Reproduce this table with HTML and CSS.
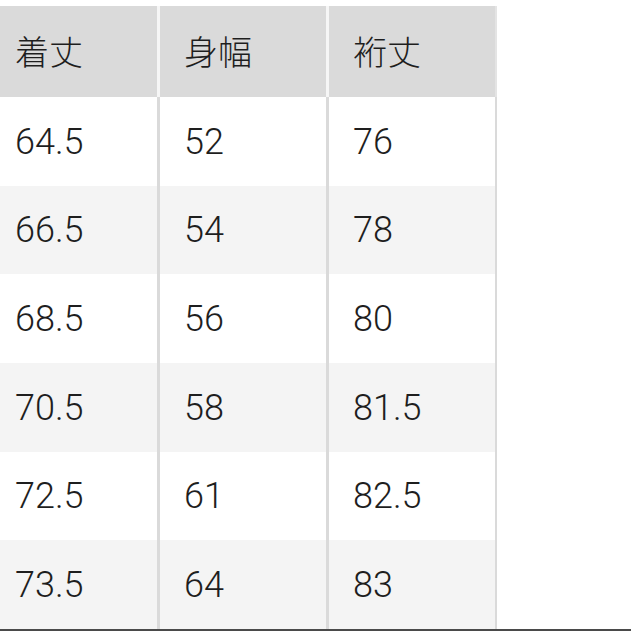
FILE: index.html
```html
<!DOCTYPE html>
<html lang="ja">
<head>
<meta charset="utf-8">
<link rel="stylesheet" href="styles.css">
</head>
<body>
<div class="page">
  <div class="table">
    <div class="row head">
      <div class="cell">着丈</div>
      <div class="cell">身幅</div>
      <div class="cell">裄丈</div>
    </div>
    <div class="row odd r89">
      <div class="cell">64.5</div><div class="cell">52</div><div class="cell">76</div>
    </div>
    <div class="row even r88">
      <div class="cell">66.5</div><div class="cell">54</div><div class="cell">78</div>
    </div>
    <div class="row odd r89">
      <div class="cell">68.5</div><div class="cell">56</div><div class="cell">80</div>
    </div>
    <div class="row even r89">
      <div class="cell">70.5</div><div class="cell">58</div><div class="cell">81.5</div>
    </div>
    <div class="row odd r88">
      <div class="cell">72.5</div><div class="cell">61</div><div class="cell">82.5</div>
    </div>
    <div class="row even r89">
      <div class="cell">73.5</div><div class="cell">64</div><div class="cell">83</div>
    </div>
  </div>
</div>
</body>
</html>
```
FILE: styles.css
```css
html, body {
  margin: 0;
  padding: 0;
  background: #ffffff;
  overflow: hidden;
}
.page {
  width: 631px;
  height: 631px;
  padding-top: 6px;
  box-sizing: border-box;
  border-bottom: 2px solid #4a4a4a;
  overflow: hidden;
}
.table {
  margin-left: -9px;
  width: 506px;
  display: flex;
  flex-direction: column;
}
.row {
  display: grid;
  grid-template-columns: 169px 169px 168px;
}
.cell {
  display: flex;
  align-items: center;
  padding-left: 24px;
  box-sizing: border-box;
  font-family: Roboto, "Liberation Sans", "Noto Sans CJK JP", sans-serif;
  font-weight: 300;
  font-size: 36px;
  color: #1e1e1e;
  border-right: 3px solid #dadada;
}
.row .cell:last-child {
  border-right-width: 2px;
}
.head {
  height: 91px;
}
.head .cell {
  background: #dadada;
  border-right-color: #f6f6f6;
  font-family: "Noto Sans CJK JP", sans-serif;
  font-weight: 300;
  font-size: 34px;
  color: #1e1e1e;
  padding-bottom: 2px;
}
.head .cell:last-child {
  border-right-color: #e4e4e4;
}
.r89 { height: 89px; }
.r88 { height: 88px; }
.odd .cell { background: #ffffff; }
.even .cell { background: #f4f4f4; }
```
